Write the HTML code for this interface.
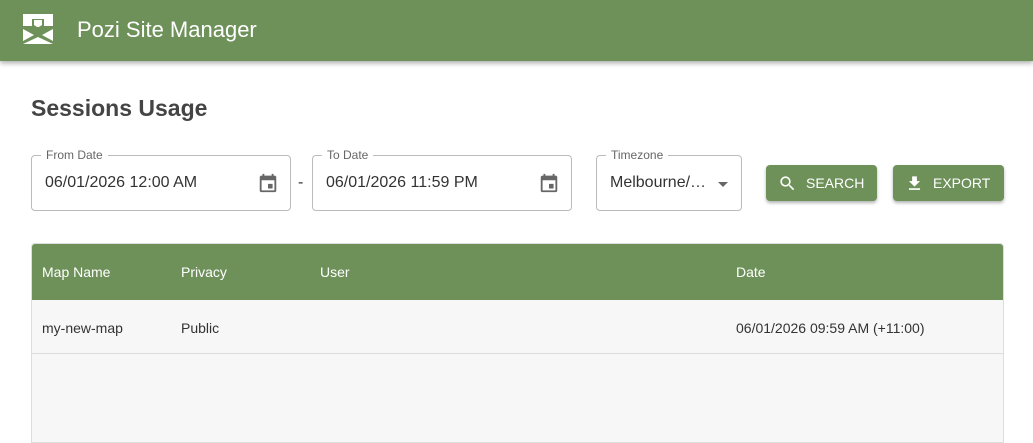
<!DOCTYPE html>
<html><head><style>
*{box-sizing:border-box;margin:0;padding:0}
body{width:1033px;height:431px;overflow:hidden;background:#fff;font-family:"Liberation Sans",sans-serif;position:relative}
.hdr{position:absolute;left:0;top:0;width:1033px;height:61px;background:#6e915a;box-shadow:0 2px 5px rgba(0,0,0,.35)}
.hdr .t{position:absolute;left:77px;top:17px;color:#fff;font-size:22px}
h1{position:absolute;left:31px;top:95px;font-size:23px;color:#444;font-weight:bold}
.f{position:absolute;top:155px;height:56px;border:1px solid #bbb;border-radius:4px}
.f .l{position:absolute;top:-8px;left:9px;background:#fff;padding:0 5px;font-size:12px;color:#666}
.f .v{position:absolute;left:13px;top:18px;font-size:16px;color:#333}
.cal{position:absolute;right:11px;top:16px}
.btn{position:absolute;top:165px;height:36px;background:#6e915a;border-radius:4px;color:#fff;font-size:14px;box-shadow:0 2px 3px rgba(0,0,0,.3);line-height:36px}
.tbl{position:absolute;left:31px;top:243px;width:973px;height:200px;background:#f7f7f7;border:1px solid #ddd;border-radius:4px 4px 0 0;overflow:hidden}
.th{height:56px;background:#6e915a;color:#fff;font-size:14px;position:relative}
.tr{height:54px;border-bottom:1px solid #ddd;font-size:14px;color:#333;position:relative}
.th span,.tr span{position:absolute;top:20px}
</style></head><body>
<div class="hdr">
<svg style="position:absolute;left:0;top:0" width="60" height="60" viewBox="0 0 60 60">
<path d="M23 14H53V26H23Z" fill="#fff"/>
<path d="M32 19H44V27H32Z" fill="#6e915a"/>
<path d="M34 20H42V25L39 27H37L34 25Z" fill="#fff"/>
<path d="M23 29L34 35L23 41Z M53 29L42 35L53 41Z" fill="#fff"/>
<path d="M38 37L53 44H23Z" fill="#fff"/>
</svg>
<div class="t">Pozi Site Manager</div></div>
<h1>Sessions Usage</h1>
<div class="f" style="left:31px;width:260px"><span class="l">From Date</span><span class="v">06/01/2026 12:00 AM</span>
<svg class="cal" width="22" height="22" viewBox="0 0 24 24"><path fill="#666" d="M19 4h-1V2h-2v2H8V2H6v2H5a2 2 0 0 0-2 2v14a2 2 0 0 0 2 2h14a2 2 0 0 0 2-2V6a2 2 0 0 0-2-2zm0 16H5V9h14zm-7-7h5v5h-5z"/></svg></div>
<div style="position:absolute;left:298px;top:174px;font-size:16px;color:#333">-</div>
<div class="f" style="left:312px;width:260px"><span class="l">To Date</span><span class="v">06/01/2026 11:59 PM</span>
<svg class="cal" width="22" height="22" viewBox="0 0 24 24"><path fill="#666" d="M19 4h-1V2h-2v2H8V2H6v2H5a2 2 0 0 0-2 2v14a2 2 0 0 0 2 2h14a2 2 0 0 0 2-2V6a2 2 0 0 0-2-2zm0 16H5V9h14zm-7-7h5v5h-5z"/></svg></div>
<div class="f" style="left:596px;width:146px"><span class="l">Timezone</span><span class="v">Melbourne/…</span>
<svg style="position:absolute;left:121px;top:26px" width="10" height="5"><path d="M0 0H10L5 5Z" fill="#666"/></svg></div>
<div class="btn" style="left:766px;width:111px"><svg style="position:absolute;left:12px;top:9px" width="19" height="19" viewBox="0 0 24 24"><path fill="#fff" d="M15.5 14h-.8l-.3-.3A6.5 6.5 0 1 0 9.5 16a6.5 6.5 0 0 0 4.2-1.6l.3.3v.8l5 5 1.5-1.5zm-6 0a4.5 4.5 0 1 1 0-9 4.5 4.5 0 0 1 0 9z"/></svg><span style="position:absolute;left:40px">SEARCH</span></div>
<div class="btn" style="left:893px;width:111px"><svg style="position:absolute;left:12px;top:9px" width="19" height="19" viewBox="0 0 24 24"><path fill="#fff" d="M19 9h-4V3H9v6H5l7 7zM5 18v2h14v-2z"/></svg><span style="position:absolute;left:40px">EXPORT</span></div>
<div class="tbl">
<div class="th"><span style="left:10px">Map Name</span><span style="left:149px">Privacy</span><span style="left:288px">User</span><span style="left:704px">Date</span></div>
<div class="tr"><span style="left:10px">my-new-map</span><span style="left:149px">Public</span><span style="left:704px">06/01/2026 09:59 AM (+11:00)</span></div>
</div>
</body></html>
